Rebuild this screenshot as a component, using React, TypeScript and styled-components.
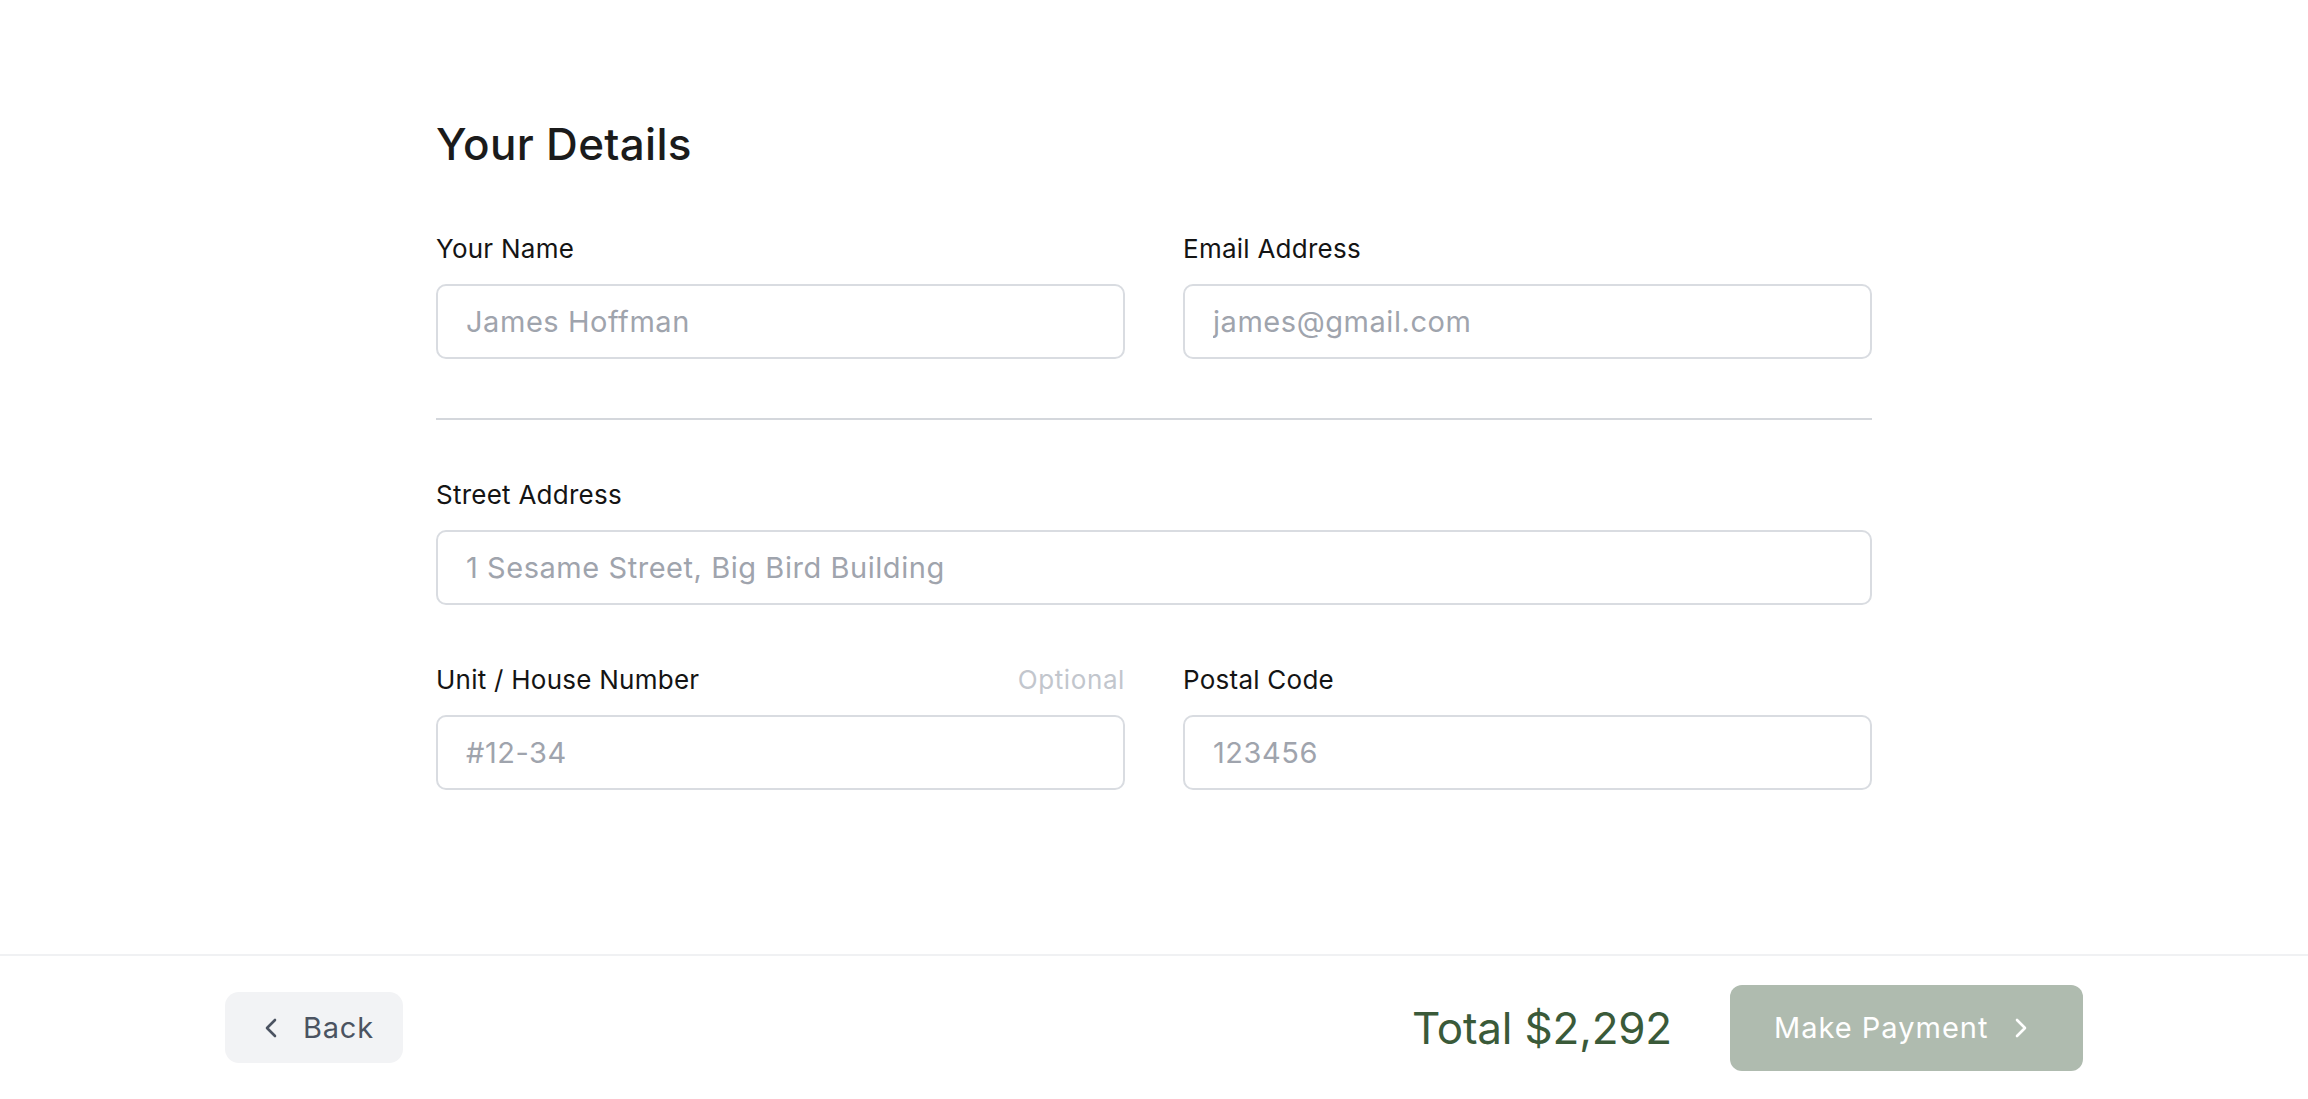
import React from "react";
import styled, { createGlobalStyle } from "styled-components";

const GlobalStyle = createGlobalStyle`
  * { box-sizing: border-box; }
  html, body { margin: 0; padding: 0; background: #ffffff; }
  body { font-family: "Inter", "Noto Sans", sans-serif; color: #161616; }
`;

const Page = styled.div`
  min-height: 100vh;
  display: flex;
  flex-direction: column;
  background: #ffffff;
`;

const Main = styled.main`
  flex: 1;
  display: flex;
  justify-content: center;
  padding-top: 113px;
`;

const Form = styled.form`
  width: 1436px;
  display: flex;
  flex-direction: column;
`;

const Title = styled.h1`
  margin: 0 0 56px;
  font-size: 44px;
  line-height: 62px;
  font-weight: 500;
  color: #1b1b1b;
  letter-spacing: 0.3px;
`;

const Row = styled.div<{ $cols?: number }>`
  display: grid;
  grid-template-columns: repeat(${(p) => p.$cols ?? 2}, 1fr);
  column-gap: 58px;
`;

const Field = styled.div`
  display: flex;
  flex-direction: column;
  gap: 17px;
`;

const LabelRow = styled.div`
  display: flex;
  justify-content: space-between;
  align-items: center;
  height: 36px;
`;

const Label = styled.label`
  font-size: 26px;
  line-height: 36px;
  font-weight: 400;
  color: #141414;
  letter-spacing: 0.25px;
`;

const Hint = styled.span`
  font-size: 26px;
  line-height: 36px;
  color: #c2c6cd;
  letter-spacing: 0.6px;
`;

const Input = styled.input`
  width: 100%;
  height: 75px;
  padding: 0 28px;
  border: 2px solid #d9dce1;
  border-radius: 10px;
  background: #ffffff;
  font-family: inherit;
  font-size: 29px;
  letter-spacing: 0.55px;
  color: #1b1b1b;
  outline: none;
  &::placeholder {
    color: #9fa4ad;
  }
`;

const Divider = styled.hr`
  margin: 59px 0 57px;
  border: none;
  height: 2px;
  background: #d4d7dc;
`;

const Spacer = styled.div`
  height: 57px;
`;

const Footer = styled.footer`
  height: 145px;
  border-top: 2px solid #f0f1f3;
  display: flex;
  align-items: center;
  justify-content: space-between;
  padding: 0 225px;
`;

const BackButton = styled.button`
  display: flex;
  align-items: center;
  gap: 25px;
  height: 71px;
  width: 178px;
  padding: 0 0 0 39px;
  border: none;
  border-radius: 14px;
  background: #f2f3f5;
  color: #4b5361;
  font-family: inherit;
  font-size: 29px;
  letter-spacing: 0.8px;
  font-weight: 400;
  cursor: pointer;
`;

const RightGroup = styled.div`
  display: flex;
  align-items: center;
  gap: 58px;
`;

const Total = styled.div`
  font-size: 44px;
  font-weight: 400;
  color: #3a5a39;
  letter-spacing: -0.2px;
`;

const PayButton = styled.button`
  display: flex;
  align-items: center;
  gap: 26px;
  height: 86px;
  width: 353px;
  padding: 0 0 0 44px;
  border: none;
  border-radius: 12px;
  background: #afbbaf;
  color: #ffffff;
  font-family: inherit;
  font-size: 29px;
  letter-spacing: 1px;
  font-weight: 400;
  cursor: pointer;
`;

const Chevron = ({ dir, color }: { dir: "left" | "right"; color: string }) => (
  <svg width="14" height="22" viewBox="0 0 14 22" fill="none">
    <path
      d={dir === "left" ? "M11 3 L3 11 L11 19" : "M3 3 L11 11 L3 19"}
      stroke={color}
      strokeWidth="2.6"
      strokeLinecap="round"
      strokeLinejoin="round"
    />
  </svg>
);

export default function App() {
  return (
    <Page>
      <GlobalStyle />
      <Main>
        <Form onSubmit={(e) => e.preventDefault()}>
          <Title>Your Details</Title>
          <Row>
            <Field>
              <LabelRow>
                <Label>Your Name</Label>
              </LabelRow>
              <Input placeholder="James Hoffman" />
            </Field>
            <Field>
              <LabelRow>
                <Label>Email Address</Label>
              </LabelRow>
              <Input placeholder="james@gmail.com" />
            </Field>
          </Row>
          <Divider />
          <Row $cols={1}>
            <Field>
              <LabelRow>
                <Label>Street Address</Label>
              </LabelRow>
              <Input placeholder="1 Sesame Street, Big Bird Building" />
            </Field>
          </Row>
          <Spacer />
          <Row>
            <Field>
              <LabelRow>
                <Label>Unit / House Number</Label>
                <Hint>Optional</Hint>
              </LabelRow>
              <Input placeholder="#12-34" />
            </Field>
            <Field>
              <LabelRow>
                <Label>Postal Code</Label>
              </LabelRow>
              <Input placeholder="123456" />
            </Field>
          </Row>
        </Form>
      </Main>
      <Footer>
        <BackButton type="button">
          <Chevron dir="left" color="#4b5361" />
          Back
        </BackButton>
        <RightGroup>
          <Total>Total $2,292</Total>
          <PayButton type="button">
            Make Payment
            <Chevron dir="right" color="#ffffff" />
          </PayButton>
        </RightGroup>
      </Footer>
    </Page>
  );
}
